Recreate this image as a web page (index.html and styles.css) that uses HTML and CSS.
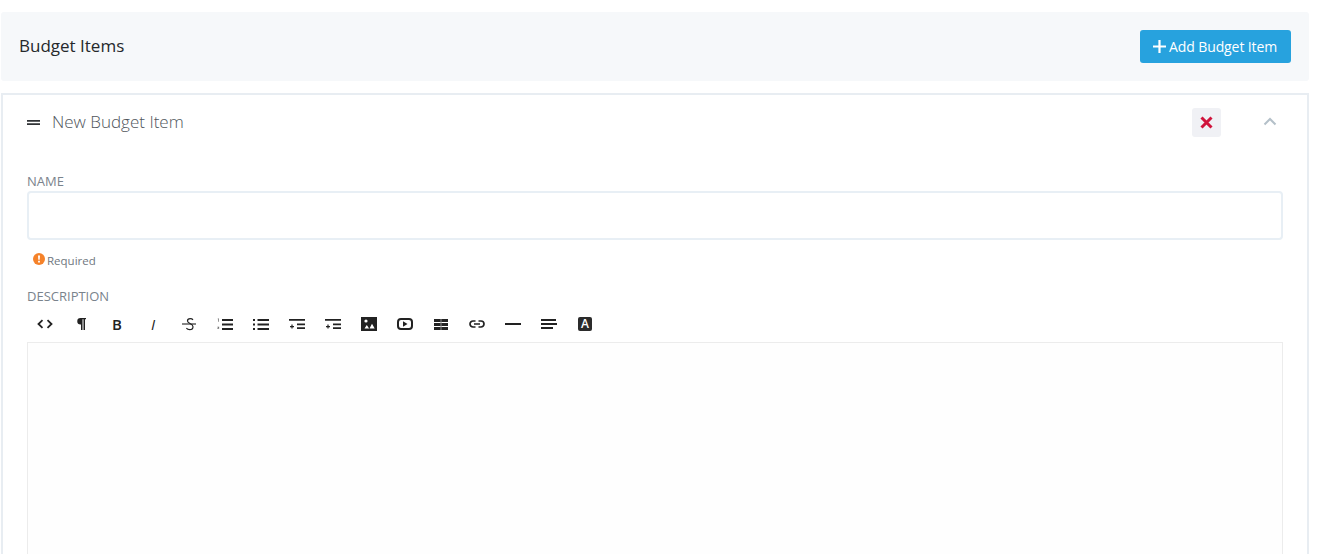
FILE: index.html
```html
<!DOCTYPE html>
<html lang="en">
<head>
<meta charset="utf-8">
<title>Budget Items</title>
<link rel="stylesheet" href="styles.css">
</head>
<body>
<main class="page">
  <header class="bar">
    <h2 class="bar-title">Budget Items</h2>
    <button class="add-btn" type="button">
      <svg class="add-icon" width="13" height="13" viewBox="0 0 13 13"><path d="M6.500 0v13M0 6.500h13" stroke="#fff" stroke-width="2.200" fill="none"/></svg>
      <span>Add Budget Item</span>
    </button>
  </header>
  <section class="panel">
    <div class="panel-head">
      <svg class="handle" width="13" height="5" viewBox="0 0 13 5"><path d="M0 0h13v1.800H0zM0 3.200h13V5H0z" fill="#303336"/></svg>
      <span class="panel-title">New Budget Item</span>
      <button class="del-btn" type="button" aria-label="Delete">
        <svg width="13" height="13" viewBox="0 0 13 13"><path d="M1.500 1.500l10 10M11.500 1.500l-10 10" stroke="#d0143c" stroke-width="3" fill="none"/></svg>
      </button>
      <svg class="chev" width="14" height="9" viewBox="0 0 14 9"><path d="M1.500 7.500L7 2l5.500 5.500" stroke="#b4c0c9" stroke-width="2" fill="none"/></svg>
    </div>
    <label class="label name-label">Name</label>
    <input class="name-input" type="text">
    <div class="req">
      <svg width="12" height="12" viewBox="0 0 12 12"><circle cx="6" cy="6" r="6" fill="#f5822a"/><path d="M5 2.500h2l-.3 4.200H5.300zM5.100 7.700h1.800v1.800H5.100z" fill="#fff"/></svg>
      <span>Required</span>
    </div>
    <label class="label desc-label">Description</label>
    <div class="toolbar">
      <span class="tool"><svg width="16" height="16" viewBox="0 0 16 16"><path d="M5.500 4.200L1.500 8l4 3.800M10.500 4.200l4 3.800-4 3.800" stroke="#222" stroke-width="1.800" fill="none"/></svg></span>
      <span class="tool"><svg width="16" height="16" viewBox="0 0 16 16"><path d="M13 2H7.500a3.200 3.200 0 0 0 0 6.500H8V14h1.500V3.300h1V14H12V3.300h1z" fill="#222"/></svg></span>
      <span class="tool glyph bold">B</span>
      <span class="tool glyph ital">I</span>
      <span class="tool"><svg width="16" height="16" viewBox="0 0 16 16"><path d="M12 3.800C11.400 3 10.400 2.700 9.200 2.700 7.600 2.700 6.500 3.500 6.500 4.900c0 2.800 5.500 2.300 5.500 5.800 0 1.800-1.400 2.900-3.300 2.900-1.400 0-2.600-.5-3.300-1.400" stroke="#222" stroke-width="1.200" fill="none"/><path d="M1 8h14" stroke="#222" stroke-width="1.100"/></svg></span>
      <span class="tool"><svg width="16" height="16" viewBox="0 0 16 16"><path d="M5 3h11v2H5zM5 7.500h11v2H5zM5 12h11v2H5z" fill="#222"/><path d="M.8 2.500h1.100v3.200h-.7V3.200H.8zM.4 10.800h1.800v.6l-1 1h1v.6H.4V12.500l1-1H.4z" fill="#666"/></svg></span>
      <span class="tool"><svg width="16" height="16" viewBox="0 0 16 16"><path d="M4.500 3H16v2H4.500zM4.500 7.500H16v2H4.500zM4.500 12H16v2H4.500zM0 3h2v2H0zM0 7.500h2v2H0zM0 12h2v2H0z" fill="#222"/></svg></span>
      <span class="tool"><svg width="16" height="16" viewBox="0 0 16 16"><path d="M0 3h16v1.700H0zM8 7.500h8v1.800H8zM8 11.200h8V13H8z" fill="#222"/><path d="M3 8.600v4M1 10.600h4" stroke="#222" stroke-width="1.200"/></svg></span>
      <span class="tool"><svg width="16" height="16" viewBox="0 0 16 16"><path d="M0 3h16v1.700H0zM8 7.500h8v1.800H8zM8 11.200h8V13H8z" fill="#222"/><path d="M3 8.600v4M1 10.600h4" stroke="#222" stroke-width="1.200"/></svg></span>
      <span class="tool"><svg width="16" height="14" viewBox="0 0 16 14"><rect width="16" height="14" fill="#222"/><circle cx="5" cy="4" r="1.600" fill="#fff"/><path d="M3.500 11.500L5.800 8l2.300 3.500zM8.500 11.500L11 6.800l2.700 4.700z" fill="#fff"/></svg></span>
      <span class="tool"><svg width="16" height="12" viewBox="0 0 16 12"><rect x="1" y="1" width="14" height="10" rx="3" stroke="#222" stroke-width="2" fill="none"/><path d="M6 3.200L10.500 6 6 8.800z" fill="#222"/></svg></span>
      <span class="tool"><svg width="14" height="11" viewBox="0 0 14 11"><path d="M0 0h14v3H0zM0 4h14v3H0zM0 8h14v3H0z" fill="#222"/><path d="M6.500 0h1v11h-1z" fill="#888"/></svg></span>
      <span class="tool"><svg width="16" height="8" viewBox="0 0 16 8"><path d="M6.500 1H4a3 3 0 0 0 0 6h2.500M9.500 1H12a3 3 0 0 1 0 6H9.500M5 4h6" stroke="#222" stroke-width="1.700" fill="none"/></svg></span>
      <span class="tool"><svg width="16" height="2" viewBox="0 0 16 2"><path d="M0 0h16v2H0z" fill="#222"/></svg></span>
      <span class="tool"><svg width="16" height="10" viewBox="0 0 16 10"><path d="M0 0h15v2H0zM0 4h16v2H0zM0 8h12v2H0z" fill="#222"/></svg></span>
      <span class="tool"><span class="a-box">A</span></span>
    </div>
    <div class="editor"></div>
  </section>
</main>
</body>
</html>
```
FILE: styles.css
```css
* { box-sizing: border-box; }
html, body { margin: 0; height: 554px; overflow: hidden; background: #fff; }
body { font-family: "Open Sans", sans-serif; color: #25282b; }
.page { padding: 12px 19px 0 1px; }
.bar {
  display: flex; align-items: center; justify-content: space-between;
  height: 69px; padding: 0 18px; background: #f6f8fa; border-radius: 3px;
}
.bar-title { margin: 0 0 2px; font-size: 17px; font-weight: 400; line-height: 22px; }
.add-btn {
  display: flex; align-items: center; gap: 3px;
  width: 151px; height: 33px; padding: 0 0 0 13px;
  border: 0; border-radius: 3px; background: #27a2de; color: #fff;
  font: 500 14px "Open Sans", sans-serif;
}
.add-btn span { letter-spacing: -0.1px; }
.panel {
  margin-top: 12px; height: 600px; padding: 0 24px;
  border: 2px solid #e8edf2; border-bottom: 0;
}
.panel-head { display: flex; align-items: center; height: 53px; padding-top: 1px; }
.handle { margin-right: 12px; }
.panel-title { flex: 1; font-size: 17px; font-weight: 300; line-height: 22px; color: #50565c; }
.del-btn {
  display: flex; align-items: center; justify-content: center;
  width: 29px; height: 29px; padding: 0; border: 0; border-radius: 3px;
  background: #f0f1f5;
}
.chev { margin: -1px 6px 0 42px; }
.label {
  display: block; font-size: 13px; line-height: 16px;
  color: #7a838c; text-transform: uppercase;
}
.name-label { margin-top: 25px; }
.name-input {
  display: block; width: 100%; height: 49px; margin-top: 2px;
  border: 2px solid #e8eff5; border-radius: 4px; background: #fff; outline: 0;
}
.req {
  display: flex; align-items: center; gap: 2px;
  height: 16px; margin: 12px 0 0 6px;
  font-size: 11.500px; color: #6f7780;
}
.req svg { margin-top: -3px; }
.desc-label { margin-top: 20px; }
.toolbar { display: flex; height: 36px; margin-top: 2px; }
.tool {
  display: flex; align-items: center; justify-content: center;
  width: 36px; height: 36px; flex: none; color: #222;
}
.glyph { font-size: 15px; line-height: 1; }
.bold { font-weight: 600; }
.ital { font-style: italic; font-weight: 400; }
.a-box {
  display: flex; align-items: center; justify-content: center;
  width: 14px; height: 14px; border-radius: 2px; background: #2b2b2b;
  color: #fff; font-size: 12px; font-weight: 600; line-height: 1;
}
.editor {
  height: 400px; border: 1px solid #ececec; background: #fefefe;
}
```
